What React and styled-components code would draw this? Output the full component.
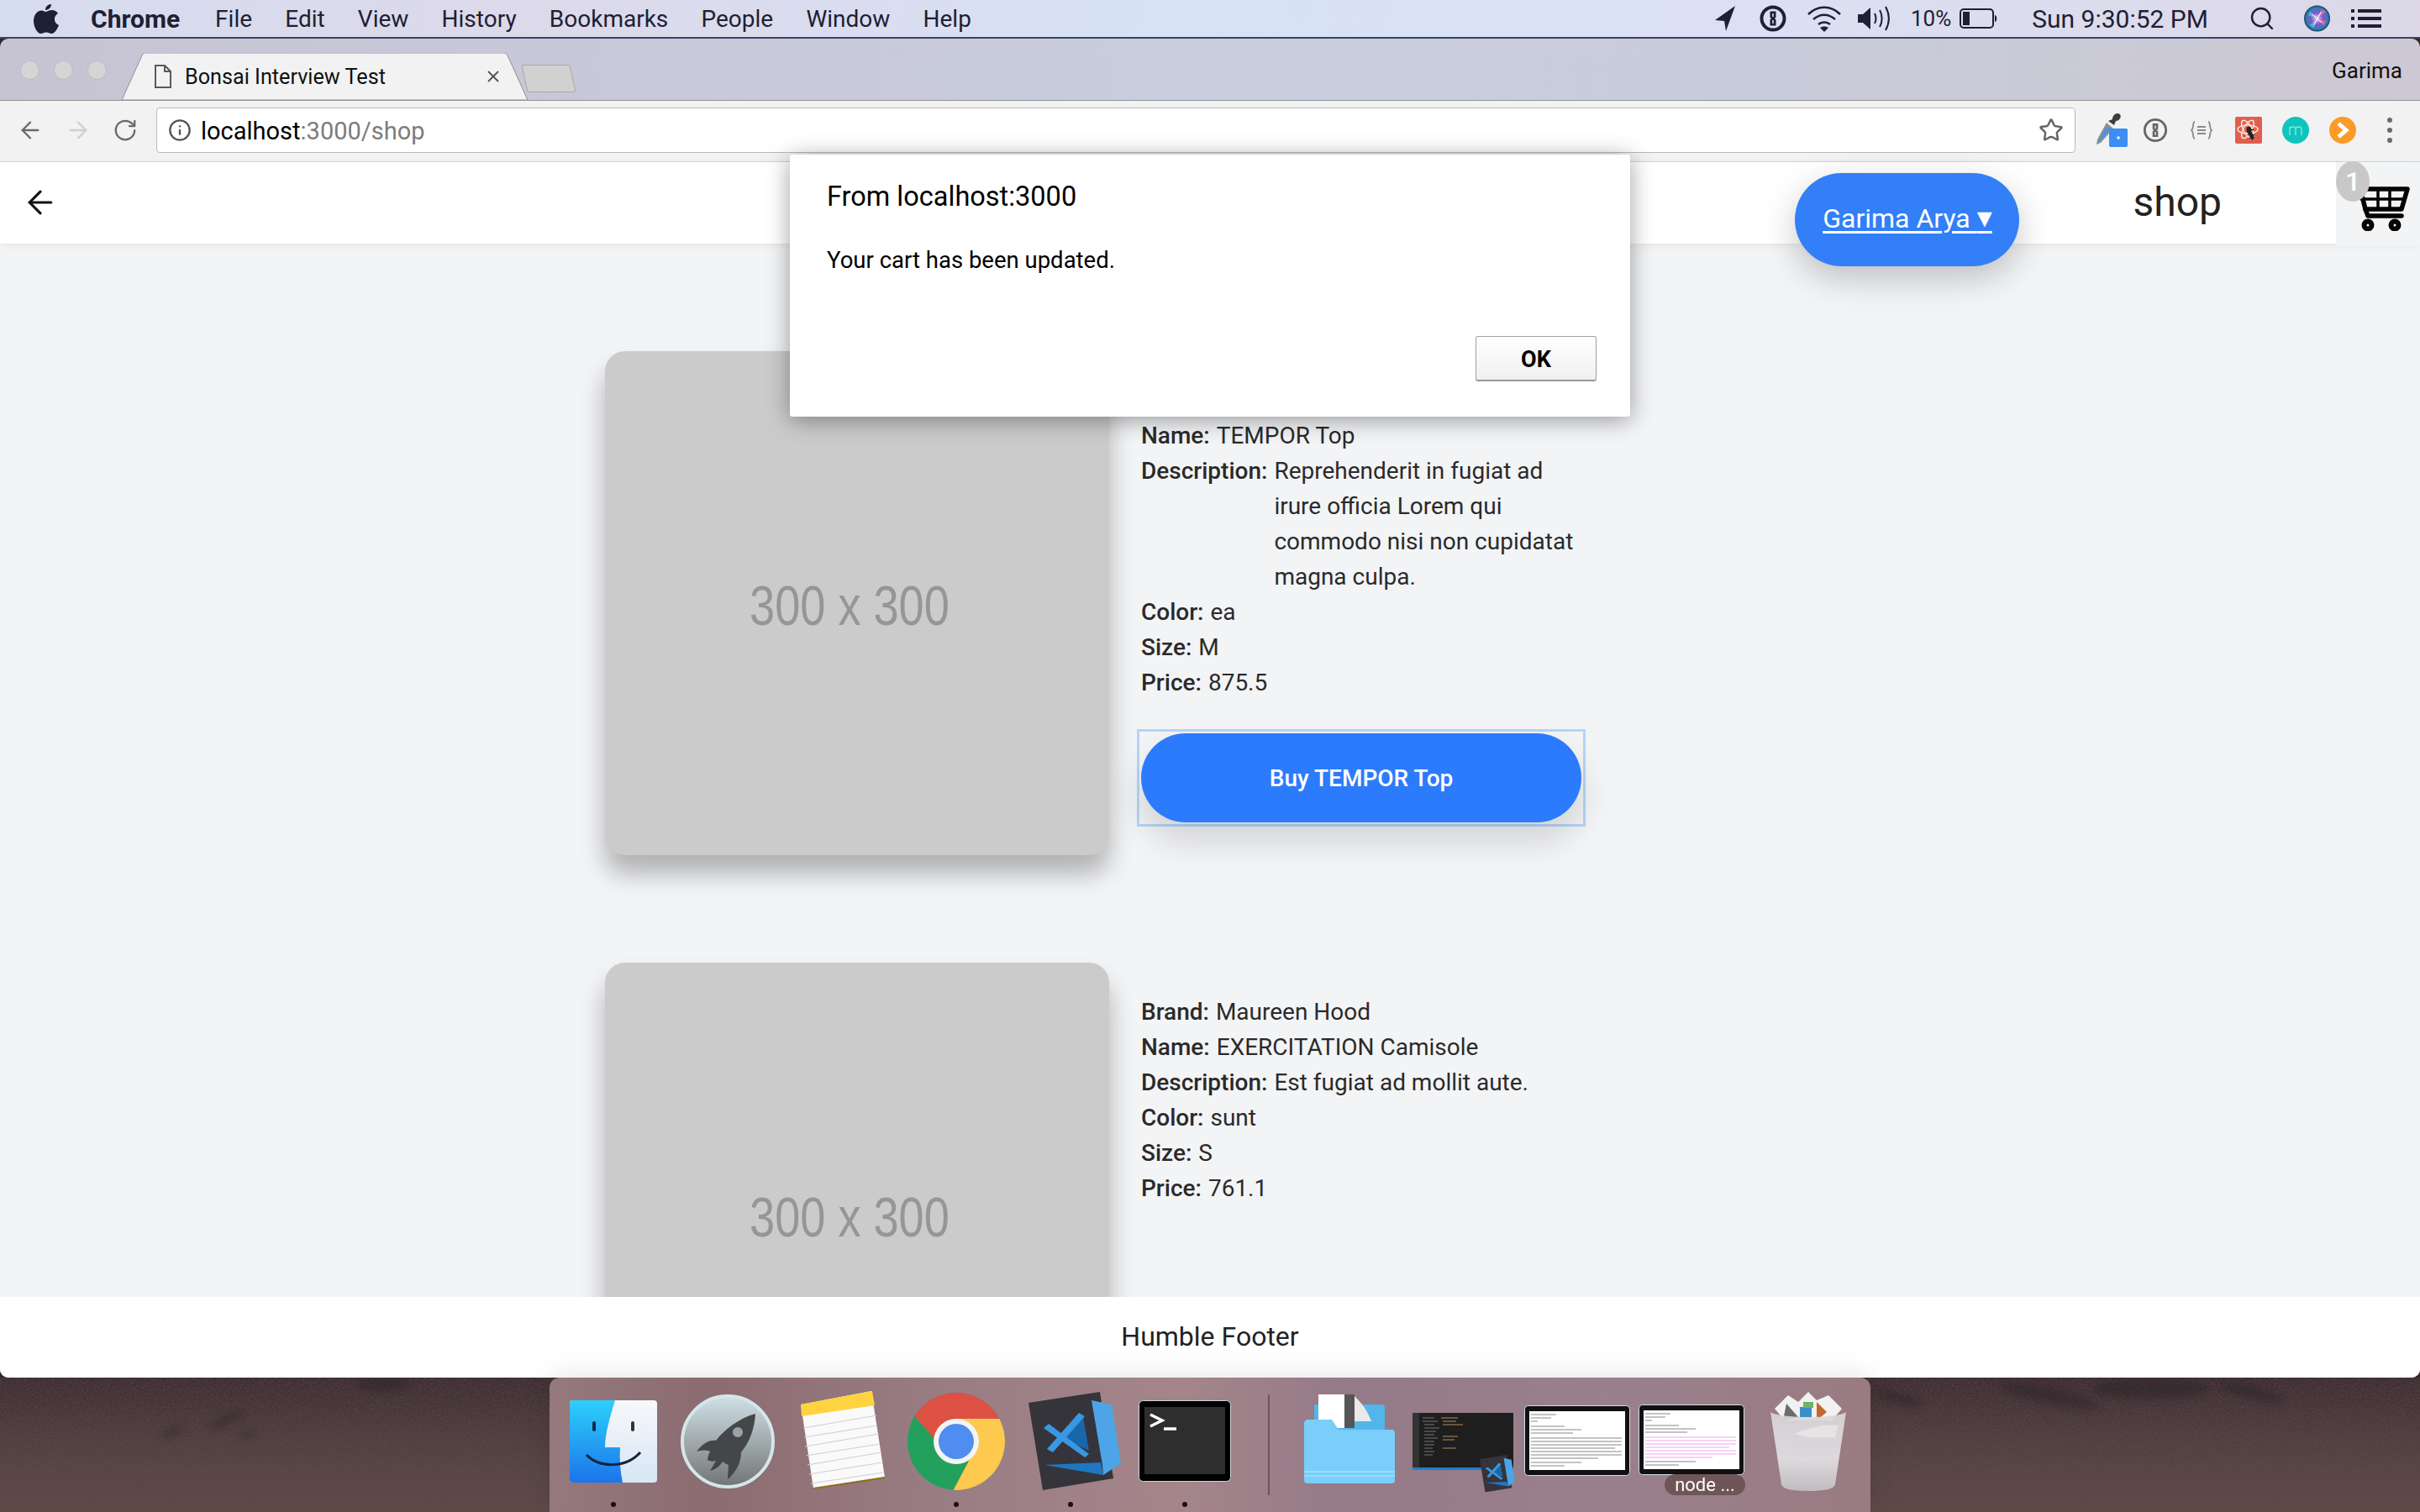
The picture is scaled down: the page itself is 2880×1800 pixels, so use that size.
import React from "react";
import styled, { createGlobalStyle } from "styled-components";
import { ArrowLeft, ArrowRight, RotateCw, Info, Star, Search, X } from "lucide-react";

const GlobalStyle = createGlobalStyle`
  html, body {
    margin: 0;
    padding: 0;
    background: #3a2a2c;
    font-family: Roboto, "Liberation Sans", sans-serif;
  }
`;

const menus = ["File", "Edit", "View", "History", "Bookmarks", "People", "Window", "Help"];

const products = [
  {
    id: 1,
    fields: [
      ["Brand:", "Elsa Ortiz"],
      ["Name:", "TEMPOR Top"],
      ["Description:", "Reprehenderit in fugiat ad irure officia Lorem qui commodo nisi non cupidatat magna culpa."],
      ["Color:", "ea"],
      ["Size:", "M"],
      ["Price:", "875.5"],
    ],
    buy: "Buy TEMPOR Top",
  },
  {
    id: 2,
    fields: [
      ["Brand:", "Maureen Hood"],
      ["Name:", "EXERCITATION Camisole"],
      ["Description:", "Est fugiat ad mollit aute."],
      ["Color:", "sunt"],
      ["Size:", "S"],
      ["Price:", "761.1"],
    ],
  },
];

const AppleLogo = () => (
  <svg width="30" height="36" viewBox="0 0 30 36">
    <path
      fill="#1e2034"
      d="M21 1c.3 3-2.600 7-7 7-.4-3.500 3-7 7-7zM14 10c2 0 4-2 8-2 2.500 0 5.500 1.300 7 4-6 3.500-5 11.500 1 14-1.500 4-5 10-8.500 10-2.500 0-3.500-1.500-6.500-1.500S11 36 8.500 36C4.500 36 0 28 0 21c0-8 5-12.500 9.500-12.500 2 0 3.500 1.500 4.500 1.500z"
    />
  </svg>
);

const LocationIcon = () => (
  <svg width="26" height="32" viewBox="0 0 26 32">
    <path fill="#1e2034" d="M25 1 1 18l11 1 2 12z" />
  </svg>
);

const OnePassword = ({ size = 32, color = "#1e2034", stroke = 4 }) => (
  <svg width={size} height={size} viewBox="0 0 32 32">
    <circle cx="16" cy="16" r="13.500" fill="none" stroke={color} strokeWidth={stroke} />
    <path fill={color} d="M12.500 7.500h7v7l-1.500 1.500 1.500 1.500v7h-7v-7l1.500-1.500-1.500-1.500z" />
    <path stroke="#e6e6ee" strokeWidth="1.500" d="M16 10v4M16 18v4" />
  </svg>
);

const WifiIcon = () => (
  <svg width="42" height="32" viewBox="0 0 42 32" fill="none" stroke="#1e2034" strokeWidth="2.500">
    <path d="M2 11c11-11 27-11 38 0" />
    <path d="M8 17c8-7 18-7 26 0" />
    <path d="M14 23c4-3.500 10-3.500 14 0" />
    <path fill="#1e2034" stroke="none" d="M21 32l-5-5c3-2 7-2 10 0z" />
  </svg>
);

const VolumeIcon = () => (
  <svg width="42" height="30" viewBox="0 0 42 30" fill="none" stroke="#1e2034" strokeWidth="2">
    <path fill="#1e2034" stroke="none" d="M0 10h6l9-8v26l-9-8H0z" />
    <path d="M20 9c2 4 2 8 0 12" />
    <path d="M26 5c3.500 6 3.500 14 0 20" />
    <path d="M33 1c5 9 5 19 0 28" />
  </svg>
);

const BatteryIcon = () => (
  <svg width="46" height="24" viewBox="0 0 46 24">
    <rect x="1" y="1" width="39" height="22" rx="4" fill="none" stroke="#1e2034" strokeWidth="2" />
    <rect x="4" y="4" width="8" height="16" fill="#1e2034" />
    <path fill="#1e2034" d="M42 8c3 0 3 8 0 8z" />
  </svg>
);

const SiriIcon = () => (
  <svg width="31" height="32" viewBox="0 0 32 32">
    <defs>
      <radialGradient id="siri" cx="0.5" cy="0.5" r="0.55">
        <stop offset="0" stopColor="#f3d7ee" />
        <stop offset="0.4" stopColor="#8a55c9" />
        <stop offset="0.75" stopColor="#2f7fb4" />
        <stop offset="1" stopColor="#15152c" />
      </radialGradient>
    </defs>
    <circle cx="16" cy="16" r="16" fill="url(#siri)" />
    <path fill="#47d0e6" opacity="0.7" d="M16 16 5 12l3-5zM16 16l-4 12-5-4z" />
    <path fill="#ef6ab2" opacity="0.7" d="M16 16l6-12 5 4zM16 16l11 3-3 6z" />
    <path stroke="#fff" strokeWidth="1.200" d="M10 11l12 10M21 8 12 24" opacity="0.9" />
  </svg>
);

const ListIcon = () => (
  <svg width="36" height="22" viewBox="0 0 36 22" fill="#1e2034">
    <rect x="0" y="0" width="4" height="4" />
    <rect x="8" y="0" width="28" height="4" />
    <rect x="0" y="9" width="4" height="4" />
    <rect x="8" y="9" width="28" height="4" />
    <rect x="0" y="18" width="4" height="4" />
    <rect x="8" y="18" width="28" height="4" />
  </svg>
);

const FileIcon = () => (
  <svg width="22" height="28" viewBox="0 0 22 28" fill="none" stroke="#5a5a5a" strokeWidth="2">
    <path d="M2 1h11l7 7v19H2z" />
    <path d="M13 1v7h7" />
  </svg>
);

const Eyedropper = () => (
  <svg width="38" height="40" viewBox="0 0 38 40">
    <path fill="#8a8f96" d="M13 11l8 7L6 35l-5 2 1-6z" />
    <path fill="#4f93dc" d="M13 16l4 3L6 32l-3 1z" />
    <path fill="#3d3d3d" d="M15 9l5-2c0-4 3-7 6-7s5 3 3 6c-1 2-3 3-5 3l-2 5z" />
    <rect x="16" y="18" width="22" height="22" rx="2" fill="#3b8ef3" />
    <rect x="25.500" y="27.500" width="3" height="3" fill="#fff" />
  </svg>
);

const BracesIcon = () => (
  <svg width="28" height="24" viewBox="0 0 28 24" fill="none" stroke="#8a8a8a" strokeWidth="1.800">
    <path d="M6 2C3 2 5 10 2 12c3 2 1 10 4 10" />
    <path d="M22 2c3 0 1 8 4 10-3 2-1 10-4 10" />
    <path d="M9 8h10M9 12h10M9 16h10" />
  </svg>
);

const ReactBug = () => (
  <svg width="32" height="32" viewBox="0 0 32 32">
    <rect width="32" height="32" rx="2" fill="#df5f4e" />
    <g fill="none" stroke="#fbe9e6" strokeWidth="1.400">
      <ellipse cx="15" cy="15" rx="12" ry="5" />
      <ellipse cx="15" cy="15" rx="12" ry="5" transform="rotate(60 15 15)" />
      <ellipse cx="15" cy="15" rx="12" ry="5" transform="rotate(120 15 15)" />
    </g>
    <path fill="#2a2020" d="M15 12c3-1 5 2 4 5l4 8-3 3-5-9c-2-2-2-6 0-7z" />
    <path stroke="#2a2020" strokeWidth="1.500" d="M15 22l4-4M17 26l6-5M14 18l8-3" />
  </svg>
);

const MBadge = () => (
  <svg width="32" height="32" viewBox="0 0 32 32">
    <circle cx="16" cy="16" r="16" fill="#0fc4bd" />
    <path fill="none" stroke="#7ee6e1" strokeWidth="1.500" d="M9 22v-10M9 15c0-4 7-4 7 0v7M16 15c0-4 7-4 7 0v7" />
  </svg>
);

const PlayBadge = () => (
  <svg width="32" height="32" viewBox="0 0 32 32">
    <circle cx="16" cy="16" r="16" fill="#fb9a28" />
    <path fill="none" stroke="#fff" strokeWidth="5" d="M11 8l9 8-9 8" />
  </svg>
);

const CartIcon = () => (
  <svg width="62" height="55" viewBox="0 0 62 55" fill="none" stroke="#050505" strokeWidth="5.500" strokeLinejoin="round" strokeLinecap="round">
    <path d="M3 5H59L52 29H9z" />
    <path strokeWidth="3.500" d="M24 5v24M38 5v24M4 17h52" />
    <path d="M9 29l3 8h40" />
    <circle cx="12" cy="48" r="4.500" strokeWidth="6" />
    <circle cx="44" cy="48" r="4.500" strokeWidth="6" />
  </svg>
);

const FinderIcon = () => (
  <svg width="104" height="98" viewBox="0 0 104 98">
    <defs>
      <linearGradient id="finderL" x1="0" y1="0" x2="0" y2="1">
        <stop offset="0" stopColor="#2dd0fb" />
        <stop offset="1" stopColor="#1c74ea" />
      </linearGradient>
      <linearGradient id="finderR" x1="0" y1="0" x2="0" y2="1">
        <stop offset="0" stopColor="#f7f8fa" />
        <stop offset="1" stopColor="#d7e6f5" />
      </linearGradient>
    </defs>
    <rect width="104" height="98" rx="4" fill="url(#finderR)" />
    <path fill="url(#finderL)" d="M4 0h50C48 20 42 40 42 56h18c-1 14 0 28 3 42H4a4 4 0 0 1-4-4V4a4 4 0 0 1 4-4z" />
    <rect x="27" y="25" width="4" height="12" rx="2" fill="#14284a" />
    <rect x="73" y="25" width="4" height="12" rx="2" fill="#333" />
    <path fill="none" stroke="#15233f" strokeWidth="3" d="M20 65c15 16 47 16 64-3" />
  </svg>
);

const RocketIcon = () => (
  <svg width="112" height="112" viewBox="0 0 112 112">
    <defs>
      <linearGradient id="rocketBg" x1="0" y1="0" x2="0" y2="1">
        <stop offset="0" stopColor="#cfe1e6" />
        <stop offset="1" stopColor="#737474" />
      </linearGradient>
    </defs>
    <ellipse cx="56" cy="56" rx="54" ry="54" fill="url(#rocketBg)" stroke="#d6e6e8" strokeWidth="4" />
    <path fill="#43474a" d="M89 23C70 28 52 42 42 55c-8-1-15 3-23 13 7-2 12-2 16 0-2 4-3 8-3 10 3 2 6 2 10 1l-7 12c7-2 12-6 15-11 2 2 5 3 7 4l-1 17c10-8 16-20 16-32 10-12 16-28 17-46z" />
    <circle cx="68" cy="45" r="6" fill="#9aa2a3" />
  </svg>
);

const NotesIcon = () => (
  <svg width="100" height="116" viewBox="0 0 100 116">
    <path fill="#fafafa" d="M0 16 84 0l16 103-85 13z" />
    <path fill="#ffd33f" d="M0 16 85 0l3 17L1 30z" />
    <path fill="none" stroke="#cfcfcf" strokeWidth="1.200" d="M3 44l87-15M4 55l87-14M5 66l88-15M6 77l88-14M8 88l88-15M10 99l87-14M12 110l86-13" />
    <path fill="none" stroke="#8f6d15" strokeWidth="2" d="M15 116l85-13" />
  </svg>
);

const ChromeIcon = () => (
  <svg width="116" height="118" viewBox="0 0 116 118">
    <clipPath id="chromeClip">
      <circle cx="58" cy="59" r="58" />
    </clipPath>
    <g clipPath="url(#chromeClip)">
      <rect width="116" height="118" fill="#23a15c" />
      <path fill="#dd5144" d="M58 0h58v32H58L32 56 6 26C20 8 38 0 58 0z" />
      <path fill="#fdc94f" d="M58 32h58v86H54l18-34c8-18-2-52-14-52z" />
    </g>
    <circle cx="58" cy="59" r="27" fill="#f4f4f4" />
    <circle cx="58" cy="59" r="21" fill="#508df0" />
  </svg>
);

const VsCodeMark = () => (
  <>
    <path fill="#35343a" d="M0 13 85 0l16 103-84 14z" />
    <path fill="#4da5e8" d="M75 10l24 5 11 70-21 14-1-12z" />
    <path fill="#1e77c0" d="M19 87l67-3 3 15z" />
    <path fill="#1967aa" d="M65 30l7 40-32-15z" />
    <path fill="#3a97e2" d="M60 25l7 4-38 43-7-4z" />
    <path fill="#3a97e2" d="M18 43l6-5 48 36-5 4z" />
  </>
);

const VsCodeIcon = () => (
  <svg width="110" height="117" viewBox="0 0 110 117">
    <VsCodeMark />
  </svg>
);

const TerminalIcon = () => (
  <svg width="110" height="98" viewBox="0 0 110 98">
    <rect x="0.500" y="0.500" width="109" height="96" rx="5" fill="#000" stroke="#cfd6da" />
    <rect x="7" y="8" width="96" height="80" fill="#2e2e2e" />
    <path fill="none" stroke="#fff" strokeWidth="3.500" d="M14 17l14 7-14 7" />
    <path stroke="#fff" strokeWidth="3.500" d="M30 34h15" />
  </svg>
);

const FolderIcon = () => (
  <svg width="108" height="106" viewBox="0 0 108 106">
    <path fill="#52b6ea" d="M12 12h80a4 4 0 0 1 4 4v40H12z" />
    <path fill="#fff" d="M17 0h31v40H17z" />
    <rect x="48" y="0" width="12" height="40" fill="#555" />
    <path fill="#e9e9e9" d="M60 2c6 6 14 14 20 30H60z" />
    <path fill="#7acefa" d="M3 30h30l8 12h63a4 4 0 0 1 4 4v56a4 4 0 0 1-4 4H4a4 4 0 0 1-4-4V33z" />
    <path fill="none" stroke="#a8e1fb" strokeWidth="1.500" d="M0 92h108M0 97h108" />
  </svg>
);

const CodeThumb = () => (
  <svg width="122" height="94" viewBox="0 0 122 94">
    <rect width="120" height="68" fill="#1e1e1e" />
    <rect y="65" width="120" height="3" fill="#1a7fd1" />
    <rect width="8" height="65" fill="#333" />
    <path stroke="#777" d="M12 6h14M12 10h18M14 14h12M14 18h18M14 22h14M14 26h12M14 30h16M14 34h12M14 38h12M14 42h10M14 46h12M14 50h10" />
    <path stroke="#b58c5b" d="M34 6h20M36 10h16M36 14h24M36 28h18M36 32h14M36 42h16" />
    <g transform="translate(80 50) scale(0.38)">
      <VsCodeMark />
    </g>
  </svg>
);

const TerminalThumb = ({ pink }) => (
  <svg width="126" height="84" viewBox="0 0 126 84">
    <rect x="0.500" y="0.500" width="125" height="83" rx="4" fill="#111" stroke="#cfe3ea" />
    <rect x="6" y="7" width="114" height="70" fill="#fff" />
    <path stroke="#555" strokeWidth="0.700" d="M8 11h30M8 15h24M8 19h8M8 25h40M8 29h60M8 33h50" />
    <path stroke={pink ? "#e77ee0" : "#555"} strokeWidth="0.700" d="M8 39h108M8 43h108M8 47h108M8 51h100M8 55h108M8 59h108M8 63h80" />
    <path stroke="#555" strokeWidth="0.700" d="M8 68h60M8 72h40" />
  </svg>
);

const TrashIcon = () => (
  <svg width="92" height="120" viewBox="0 0 92 120">
    <defs>
      <linearGradient id="trashBody" x1="0" y1="0" x2="0" y2="1">
        <stop offset="0" stopColor="#d9d6da" />
        <stop offset="0.6" stopColor="#e2e0e3" />
        <stop offset="1" stopColor="#c4c1c5" />
      </linearGradient>
    </defs>
    <path fill="#f1f1f1" d="M6 22 22 6l12 8L46 2l10 10 14-6 16 16-12 14H18z" />
    <path fill="#6b6b6b" d="M20 16l14 16-18 4z" />
    <path fill="#3c8ec9" d="M36 20h14v12H36z" />
    <path fill="#6db36a" d="M40 14h12v7H40z" />
    <path fill="#c4662d" d="M56 14l12 12-12 10z" />
    <path fill="url(#trashBody)" opacity="0.92" d="M1 26c10 8 80 8 90 0L78 112c-1 6-14 8-32 8s-31-2-32-8z" />
    <path fill="#f4f3f4" opacity="0.5" d="M30 52c16-8 40-12 52-10l-4 14c-14 0-32 2-48-4z" />
  </svg>
);

const WallpaperTexture = () => (
  <WallpaperSvg width="2880" height="160" viewBox="0 0 2880 160">
    <filter id="sand">
      <feTurbulence type="fractalNoise" baseFrequency="0.35 0.6" numOctaves="3" seed="7" />
      <feColorMatrix values="0 0 0 0 0.12  0 0 0 0 0.08  0 0 0 0 0.08  0.9 0 0 0 -0.25" />
    </filter>
    <filter id="soft">
      <feGaussianBlur stdDeviation="4" />
    </filter>
    <rect width="2880" height="160" filter="url(#sand)" />
    <g fill="#2c2028" opacity="0.45" filter="url(#soft)">
      <ellipse cx="270" cy="50" rx="22" ry="5" transform="rotate(-25 270 50)" />
      <ellipse cx="205" cy="65" rx="14" ry="4" transform="rotate(-25 205 65)" />
      <ellipse cx="295" cy="68" rx="8" ry="4" />
      <ellipse cx="455" cy="8" rx="30" ry="8" />
      <ellipse cx="2440" cy="22" rx="60" ry="10" transform="rotate(12 2440 22)" />
      <ellipse cx="2560" cy="14" rx="70" ry="12" />
      <ellipse cx="2680" cy="18" rx="40" ry="8" transform="rotate(14 2680 18)" />
      <ellipse cx="2260" cy="25" rx="28" ry="7" transform="rotate(14 2260 25)" />
    </g>
  </WallpaperSvg>
);

const Screen = styled.div`
  width: 2880px;
  height: 1800px;
  display: flex;
  flex-direction: column;
  overflow: hidden;
  position: relative;
  background: #33272a;
  color: #1f1f1f;
`;

const MenuBar = styled.header`
  height: 44px;
  flex: none;
  display: flex;
  align-items: center;
  padding: 0 46px 0 40px;
  border-bottom: 2px solid #3a4266;
  background: linear-gradient(90deg, #d6dcef 0%, #dcd9ea 22%, #d7e2f5 48%, #dbe1f3 70%, #dcd8e8 100%);
  color: #1e2034;
  font-size: 28px;
`;

const Brand = styled.span`
  font-size: 30px;
  font-weight: 700;
  margin: 0 42px 0 38px;
`;

const MenuItem = styled.span`
  margin-right: 39.200px;
`;

const Status = styled.div`
  margin-left: auto;
  display: flex;
  align-items: center;
`;

const StatusItem = styled.span`
  margin-left: ${(p) => p.$gap}px;
  font-size: ${(p) => p.$size || 28}px;
  display: flex;
  align-items: center;
`;

const Browser = styled.section`
  flex: 1;
  min-height: 0;
  display: flex;
  flex-direction: column;
`;

const TabStrip = styled.div`
  height: 74px;
  flex: none;
  box-sizing: border-box;
  display: flex;
  align-items: flex-end;
  padding-right: 21px;
  border-bottom: 1px solid #8f8f98;
  border-radius: 10px 10px 0 0;
  background: linear-gradient(90deg, #c6c4d3 0%, #c9cddd 50%, #c8ccdb 70%, #cdc8d3 100%);
`;

const Lights = styled.div`
  width: 145px;
  flex: none;
  align-self: flex-start;
  box-sizing: border-box;
  padding: 26px 0 0 24px;
  display: flex;
  gap: 17px;
`;

const Light = styled.span`
  width: 23px;
  height: 23px;
  border-radius: 50%;
  background: #d6d5d6;
  box-shadow: inset 0 0 0 1px #bdbcc0;
`;

const Tab = styled.div`
  width: 483px;
  height: 56px;
  flex: none;
  position: relative;
  box-sizing: border-box;
  display: flex;
  align-items: center;
  padding: 0 30px 0 38px;
  font-size: 25.200px;
  color: #111;
`;

const TabShape = styled.svg`
  position: absolute;
  left: 0;
  top: 0;
`;

const TabIcon = styled.span`
  position: relative;
  display: flex;
  margin-right: ${(p) => p.$gap || 0}px;
`;

const TabTitle = styled.span`
  position: relative;
  flex: 1;
`;

const NewTab = styled.div`
  width: 56px;
  height: 31px;
  margin: 0 0 9px -4px;
  background: #d1d1d1;
  border: 1px solid #a8a8a8;
  border-radius: 3px;
  transform: skewX(12deg);
`;

const Profile = styled.span`
  margin-left: auto;
  align-self: center;
  padding-top: 2px;
  font-size: 26px;
  color: #111;
`;

const Toolbar = styled.div`
  height: 73px;
  flex: none;
  box-sizing: border-box;
  display: flex;
  align-items: center;
  padding: 0 0 2px 20px;
  background: #f2f2f2;
  border-bottom: 1px solid #d4d4d4;
`;

const NavButtons = styled.div`
  display: flex;
  align-items: center;
  gap: 25px;
  margin-right: 22px;
`;

const Omnibox = styled.div`
  width: 2284px;
  height: 54px;
  flex: none;
  box-sizing: border-box;
  display: flex;
  align-items: center;
  padding: 0 13px;
  background: #fff;
  border: 1px solid #b9b9b9;
  border-radius: 4px;
  font-size: 29px;
  color: #000;
`;

const Url = styled.span`
  margin-left: 11px;
  padding-top: 2px;
  flex: 1;
`;

const UrlRest = styled.span`
  color: #7c7c7c;
`;

const Extensions = styled.div`
  display: flex;
  align-items: center;
  padding-left: 24px;
`;

const Extension = styled.span`
  margin-left: ${(p) => p.$gap || 0}px;
  display: flex;
`;

const Kebab = styled.span`
  margin-left: 37px;
  display: flex;
  flex-direction: column;
  gap: 6px;
`;

const KebabDot = styled.i`
  width: 6px;
  height: 6px;
  border-radius: 50%;
  background: #6b6b6b;
`;

const Page = styled.div`
  flex: 1;
  min-height: 0;
  display: flex;
  flex-direction: column;
  background: #f3f4f6;
  border-radius: 0 0 10px 10px;
`;

const AppBar = styled.div`
  height: 97px;
  flex: none;
  display: flex;
  align-items: flex-start;
  background: #fff;
  box-shadow: 0 2px 8px rgba(0, 0, 0, 0.06);
  position: relative;
  z-index: 2;
`;

const BackLink = styled.span`
  margin: 26px auto 0 26px;
  display: flex;
  color: #111;
`;

const UserPill = styled.a`
  width: 267px;
  height: 111px;
  margin-top: 13px;
  box-sizing: border-box;
  padding-bottom: 3px;
  display: flex;
  align-items: center;
  justify-content: center;
  border-radius: 56px;
  background: #327ff7;
  box-shadow: 0 14px 40px rgba(0, 0, 0, 0.22);
  color: #fff;
  font-size: 32px;
`;

const PillLabel = styled.span`
  line-height: 40px;
  text-decoration: underline;
  text-underline-offset: 4px;
`;

const Caret = styled.span`
  font-family: "DejaVu Sans", sans-serif;
  font-size: 36px;
  line-height: 30px;
`;

const PageName = styled.span`
  margin: 19px 136px 0 135px;
  font-size: 48px;
  color: #222;
`;

const CartBox = styled.div`
  width: 100px;
  height: 99px;
  flex: none;
  position: relative;
  background: #f3f4f6;
  display: flex;
  align-items: flex-start;
  justify-content: flex-end;
  padding: 27px 12px 0 0;
  box-sizing: border-box;
`;

const CartCount = styled.span`
  position: absolute;
  left: 0;
  top: -1px;
  width: 40px;
  height: 48px;
  border-radius: 50%;
  background: #c8c8c8;
  color: #fff;
  font-size: 32px;
  font-weight: 500;
  display: flex;
  align-items: center;
  justify-content: center;
`;

const Main = styled.main`
  flex: 1;
  min-height: 0;
  overflow: hidden;
  box-sizing: border-box;
  padding: 128px 0 0 720px;
  display: flex;
  flex-direction: column;
  gap: 128px;
`;

const Product = styled.article`
  display: flex;
  flex: none;
  gap: 38px;
`;

const Placeholder = styled.div`
  width: 600px;
  height: 600px;
  flex: none;
  box-sizing: border-box;
  padding: 6px 18px 0 0;
  display: flex;
  align-items: center;
  justify-content: center;
  border-radius: 24px;
  background: #cbcbcb;
  box-shadow: 0 22px 30px rgba(0, 0, 0, 0.28);
  color: #969696;
  font-family: "Liberation Sans", Arial, sans-serif;
  font-size: 66px;
`;

const PlaceholderText = styled.span`
  display: inline-block;
  transform: scaleX(0.82);
`;

const Details = styled.div`
  width: 524px;
  padding-top: 38px;
  font-size: 28px;
  line-height: 42px;
  color: #2a2a2a;
`;

const Row = styled.div`
  display: flex;
  gap: 8px;
`;

const Label = styled.span`
  flex: none;
  font-weight: 500;
`;

const Value = styled.span`
  width: 364px;
`;

const BuyFrame = styled.div`
  margin: 34px -5px 0;
  padding: 2px;
  border: 3px solid #b5d5f8;
`;

const BuyButton = styled.button`
  width: 100%;
  height: 106px;
  display: block;
  border: 0;
  border-radius: 53px;
  background: #2d7bfd;
  box-shadow: 0 22px 40px rgba(0, 0, 0, 0.14);
  color: #fff;
  font-family: Roboto, sans-serif;
  font-size: 28px;
  font-weight: 500;
`;

const Footer = styled.footer`
  height: 96px;
  flex: none;
  box-sizing: border-box;
  padding-bottom: 2px;
  display: flex;
  align-items: center;
  justify-content: center;
  border-radius: 0 0 10px 10px;
  background: #fff;
  font-size: 32px;
  color: #222;
  position: relative;
`;

const Dialog = styled.div`
  position: absolute;
  left: 940px;
  top: 184px;
  width: 1000px;
  height: 312px;
  box-sizing: border-box;
  padding: 30px 40px 0 44px;
  background: #fff;
  border-radius: 3px;
  box-shadow: 0 4px 28px rgba(0, 0, 0, 0.38);
  color: #000;
  z-index: 5;
`;

const DialogTitle = styled.div`
  font-size: 32.500px;
  line-height: 40px;
`;

const DialogText = styled.div`
  margin-top: 39px;
  font-size: 27.500px;
  line-height: 34px;
`;

const DialogActions = styled.div`
  margin-top: 73px;
  display: flex;
  justify-content: flex-end;
`;

const OkButton = styled.button`
  width: 144px;
  height: 54px;
  padding-top: 3px;
  border: 1px solid #a0a0a0;
  border-bottom: 2px solid #979797;
  border-radius: 3px;
  background: linear-gradient(#fff, #f0f0f0);
  color: #000;
  font-family: Roboto, sans-serif;
  font-size: 27px;
  font-weight: 700;
`;

const DockArea = styled.div`
  height: 160px;
  flex: none;
  position: relative;
  display: flex;
  justify-content: center;
  background: linear-gradient(180deg, #3a2b30 0%, #4a393c 35%, #574443 70%, #5e4845 100%);
`;

const WallpaperSvg = styled.svg`
  position: absolute;
  left: 0;
  top: 0;
`;

const Dock = styled.nav`
  width: 1572px;
  height: 160px;
  position: relative;
  box-sizing: border-box;
  padding-left: 24px;
  display: flex;
  align-items: flex-start;
  border-radius: 12px 12px 0 0;
  background: linear-gradient(90deg, #95797d 0%, #8b6c70 12%, #9a7d84 30%, #a4858a 48%, #957a88 60%, #99808c 80%, #9a7b82 100%);
  box-shadow: 0 -4px 30px rgba(0, 0, 0, 0.1);
`;

const DockItem = styled.div`
  flex: none;
  height: 160px;
  position: relative;
  display: flex;
  justify-content: center;
  box-sizing: border-box;
  width: ${(p) => p.$w}px;
  margin-left: ${(p) => p.$gap || 0}px;
  padding-top: ${(p) => p.$top}px;
`;

const RunDot = styled.i`
  position: absolute;
  left: calc(50% + ${(p) => p.$shift || 0}px);
  bottom: 6px;
  width: 6px;
  height: 6px;
  margin-left: -3px;
  border-radius: 50%;
  background: #1c0c10;
`;

const DockSeparator = styled.div`
  width: 2px;
  height: 120px;
  flex: none;
  margin: 20px 0 0 44px;
  background: #6b5366;
`;

const NodeLabel = styled.span`
  position: absolute;
  right: -1px;
  top: 115px;
  width: 96px;
  height: 25px;
  border-radius: 13px;
  background: #6e5558;
  color: #fff;
  font-size: 22px;
  line-height: 25px;
  text-align: center;
`;

export default function App() {
  return (
    <Screen>
      <GlobalStyle />
      <MenuBar>
        <AppleLogo />
        <Brand>Chrome</Brand>
        {menus.map((m) => (
          <MenuItem key={m}>{m}</MenuItem>
        ))}
        <Status>
          <StatusItem $gap={0}><LocationIcon /></StatusItem>
          <StatusItem $gap={28}><OnePassword /></StatusItem>
          <StatusItem $gap={24}><WifiIcon /></StatusItem>
          <StatusItem $gap={19}><VolumeIcon /></StatusItem>
          <StatusItem $gap={21} $size={26}>10%</StatusItem>
          <StatusItem $gap={10}><BatteryIcon /></StatusItem>
          <StatusItem $gap={40} $size={30}>Sun 9:30:52 PM</StatusItem>
          <StatusItem $gap={48}><Search size={32} color="#1e2034" strokeWidth={1.8} /></StatusItem>
          <StatusItem $gap={34}><SiriIcon /></StatusItem>
          <StatusItem $gap={25}><ListIcon /></StatusItem>
        </Status>
      </MenuBar>

      <Browser>
        <TabStrip>
          <Lights>
            <Light />
            <Light />
            <Light />
          </Lights>
          <Tab>
            <TabShape width="483" height="56" viewBox="0 0 483 56">
              <path d="M0 56 24 3c1-2 2-3 4-3h427c2 0 3 1 4 3l24 53z" fill="#f2f2f2" stroke="#8f8f98" />
            </TabShape>
            <TabIcon $gap={15}><FileIcon /></TabIcon>
            <TabTitle>Bonsai Interview Test</TabTitle>
            <TabIcon><X size={22} color="#555" strokeWidth={2} /></TabIcon>
          </Tab>
          <NewTab />
          <Profile>Garima</Profile>
        </TabStrip>

        <Toolbar>
          <NavButtons>
            <ArrowLeft size={32} color="#6a6a6a" strokeWidth={1.7} />
            <ArrowRight size={32} color="#cfcfcf" strokeWidth={1.7} />
            <RotateCw size={30} color="#6a6a6a" strokeWidth={1.8} />
          </NavButtons>
          <Omnibox>
            <Info size={28} color="#555" strokeWidth={2} />
            <Url>localhost<UrlRest>:3000/shop</UrlRest></Url>
            <Star size={30} color="#666" strokeWidth={2} />
          </Omnibox>
          <Extensions>
            <Extension><Eyedropper /></Extension>
            <Extension $gap={18}><OnePassword size={30} color="#666" stroke={3} /></Extension>
            <Extension $gap={26}><BracesIcon /></Extension>
            <Extension $gap={26}><ReactBug /></Extension>
            <Extension $gap={24}><MBadge /></Extension>
            <Extension $gap={24}><PlayBadge /></Extension>
            <Kebab><KebabDot /><KebabDot /><KebabDot /></Kebab>
          </Extensions>
        </Toolbar>

        <Page>
          <AppBar>
            <BackLink><ArrowLeft size={44} strokeWidth={1.7} /></BackLink>
            <UserPill>
              <PillLabel>Garima Arya <Caret>▾</Caret></PillLabel>
            </UserPill>
            <PageName>shop</PageName>
            <CartBox>
              <CartIcon />
              <CartCount>1</CartCount>
            </CartBox>
          </AppBar>

          <Main>
            {products.map((product) => (
              <Product key={product.id}>
                <Placeholder><PlaceholderText>300 x 300</PlaceholderText></Placeholder>
                <Details>
                  {product.fields.map(([label, value]) => (
                    <Row key={label}>
                      <Label>{label}</Label>
                      <Value>{value}</Value>
                    </Row>
                  ))}
                  {product.buy && (
                    <BuyFrame>
                      <BuyButton>{product.buy}</BuyButton>
                    </BuyFrame>
                  )}
                </Details>
              </Product>
            ))}
          </Main>

          <Footer>Humble Footer</Footer>
        </Page>
      </Browser>

      <DockArea>
        <WallpaperTexture />
        <Dock>
          <DockItem $w={104} $top={27}><FinderIcon /><RunDot /></DockItem>
          <DockItem $w={112} $gap={28} $top={20}><RocketIcon /></DockItem>
          <DockItem $w={100} $gap={31} $top={16}><NotesIcon /></DockItem>
          <DockItem $w={116} $gap={27} $top={17}><ChromeIcon /><RunDot /></DockItem>
          <DockItem $w={110} $gap={28} $top={17}><VsCodeIcon /><RunDot $shift={-5} /></DockItem>
          <DockItem $w={110} $gap={21} $top={27}><TerminalIcon /><RunDot /></DockItem>
          <DockSeparator />
          <DockItem $w={108} $gap={41} $top={20}><FolderIcon /></DockItem>
          <DockItem $w={122} $gap={21} $top={42}><CodeThumb /></DockItem>
          <DockItem $w={126} $gap={11} $top={33}><TerminalThumb /></DockItem>
          <DockItem $w={126} $gap={10} $top={32}>
            <TerminalThumb pink />
            <NodeLabel>node ...</NodeLabel>
          </DockItem>
          <DockItem $w={92} $gap={30} $top={15}><TrashIcon /></DockItem>
        </Dock>
      </DockArea>

      <Dialog>
        <DialogTitle>From localhost:3000</DialogTitle>
        <DialogText>Your cart has been updated.</DialogText>
        <DialogActions>
          <OkButton>OK</OkButton>
        </DialogActions>
      </Dialog>
    </Screen>
  );
}
